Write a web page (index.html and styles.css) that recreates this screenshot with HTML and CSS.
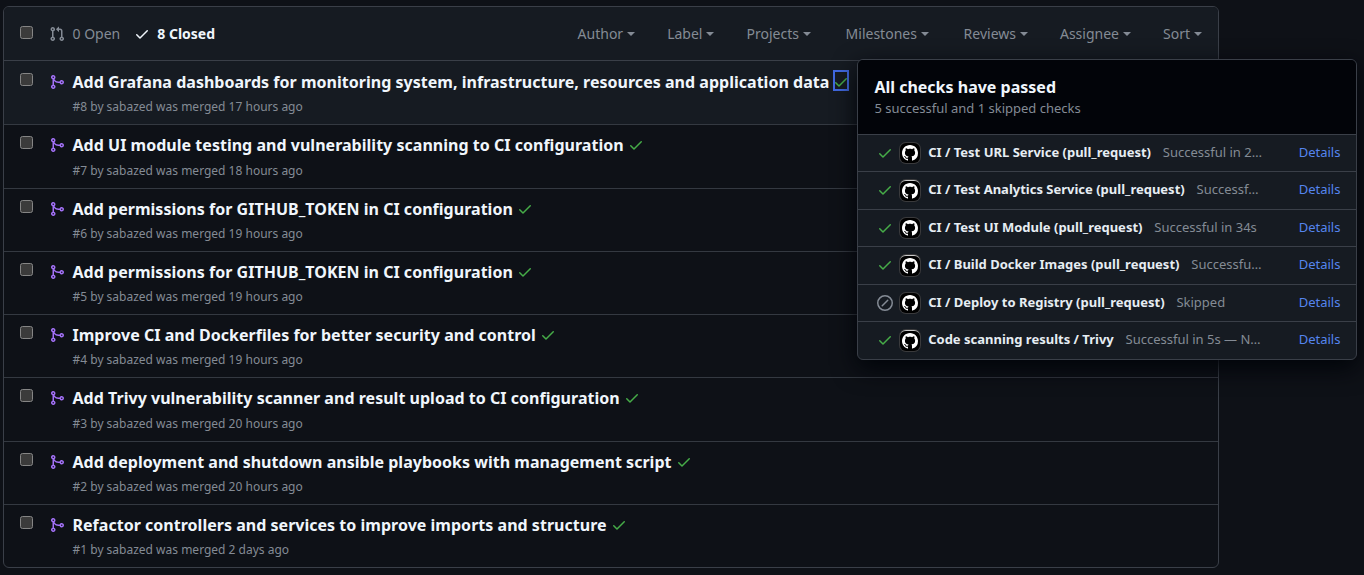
FILE: index.html
```html
<!DOCTYPE html>
<html lang="en">
<head>
<meta charset="utf-8">
<title>Pull requests</title>
<link rel="stylesheet" href="styles.css">
</head>
<body>
<svg class="defs" width="0" height="0">
<symbol id="pr" viewBox="0 0 16 16"><path d="M1.5 3.25a2.25 2.25 0 1 1 3 2.122v5.256a2.251 2.251 0 1 1-1.5 0V5.372A2.25 2.25 0 0 1 1.5 3.25Zm5.677-.177L9.573.677A.25.25 0 0 1 10 .854V2.5h1A2.5 2.5 0 0 1 13.5 5v5.628a2.251 2.251 0 1 1-1.5 0V5a1 1 0 0 0-1-1h-1v1.646a.25.25 0 0 1-.427.177L7.177 3.427a.25.25 0 0 1 0-.354ZM3.75 2.5a.75.75 0 1 0 0 1.5.75.75 0 0 0 0-1.5Zm0 9.5a.75.75 0 1 0 0 1.5.75.75 0 0 0 0-1.5Zm8.25.75a.75.75 0 1 0 1.5 0 .75.75 0 0 0-1.5 0Z"/></symbol>
<symbol id="merge" viewBox="0 0 16 16"><path d="M5.45 5.154A4.25 4.25 0 0 0 9.25 7.5h1.378a2.251 2.251 0 1 1 0 1.5H9.25A5.734 5.734 0 0 1 5 7.123v3.505a2.25 2.25 0 1 1-1.5 0V5.372a2.25 2.25 0 1 1 1.95-.218ZM4.25 13.5a.75.75 0 1 0 0-1.5.75.75 0 0 0 0 1.5Zm8.5-4.5a.75.75 0 1 0 0-1.5.75.75 0 0 0 0 1.5ZM5 3.25a.75.75 0 1 0-1.5 0 .75.75 0 0 0 1.5 0Z"/></symbol>
<symbol id="check" viewBox="0 0 16 16"><path d="M13.78 4.22a.75.75 0 0 1 0 1.06l-7.25 7.25a.75.75 0 0 1-1.06 0L2.22 9.28a.751.751 0 0 1 .018-1.042.751.751 0 0 1 1.042-.018L6 10.94l6.72-6.72a.75.75 0 0 1 1.06 0Z"/></symbol>
<symbol id="skip" viewBox="0 0 16 16"><path d="M8 0a8 8 0 1 1 0 16A8 8 0 0 1 8 0ZM1.5 8a6.5 6.5 0 1 0 13 0 6.5 6.5 0 0 0-13 0Zm9.78-2.22-5.5 5.5a.749.749 0 0 1-1.275-.326.749.749 0 0 1 .215-.734l5.5-5.5a.751.751 0 0 1 1.042.018.751.751 0 0 1 .018 1.042Z"/></symbol>
<symbol id="mark" viewBox="0 0 16 16"><path d="M8 0C3.58 0 0 3.58 0 8c0 3.54 2.29 6.53 5.47 7.59.4.07.55-.17.55-.38 0-.19-.01-.82-.01-1.49-2.01.37-2.53-.49-2.69-.94-.09-.23-.48-.94-.82-1.13-.28-.15-.68-.52-.01-.53.63-.01 1.08.58 1.23.82.72 1.21 1.87.87 2.33.66.07-.52.28-.87.51-1.07-1.78-.2-3.64-.89-3.64-3.95 0-.87.31-1.59.82-2.15-.08-.2-.36-1.02.08-2.12 0 0 .67-.21 2.2.82.64-.18 1.32-.27 2-.27.68 0 1.36.09 2 .27 1.53-1.04 2.2-.82 2.2-.82.44 1.1.16 1.92.08 2.12.51.56.82 1.27.82 2.15 0 3.07-1.87 3.75-3.65 3.95.29.25.54.73.54 1.48 0 1.07-.01 1.93-.01 2.2 0 .21.15.46.55.38A8.013 8.013 0 0 0 16 8c0-4.42-3.58-8-8-8z"/></symbol>
</svg>
<main class="list">
<header class="list-head">
<span class="box"></span>
<a class="state"><svg class="icon"><use href="#pr"/></svg>0 Open</a>
<a class="state current"><svg class="icon"><use href="#check"/></svg>8 Closed</a>
<nav class="filters"><a>Author</a><a>Label</a><a class="wide">Projects</a><a class="wide">Milestones</a><a>Reviews</a><a>Assignee</a><a>Sort</a></nav>
</header>
<article class="row tall hover"><span class="box"></span><svg class="icon merge"><use href="#merge"/></svg><div class="text"><h3>Add Grafana dashboards for monitoring system, infrastructure, resources and application data<span class="status focus"><svg class="icon"><use href="#check"/></svg></span></h3><p>#8 by sabazed was merged 17 hours ago</p></div></article>
<article class="row tall"><span class="box"></span><svg class="icon merge"><use href="#merge"/></svg><div class="text"><h3>Add UI module testing and vulnerability scanning to CI configuration<span class="status"><svg class="icon"><use href="#check"/></svg></span></h3><p>#7 by sabazed was merged 18 hours ago</p></div></article>
<article class="row"><span class="box"></span><svg class="icon merge"><use href="#merge"/></svg><div class="text"><h3>Add permissions for GITHUB_TOKEN in CI configuration<span class="status"><svg class="icon"><use href="#check"/></svg></span></h3><p>#6 by sabazed was merged 19 hours ago</p></div></article>
<article class="row"><span class="box"></span><svg class="icon merge"><use href="#merge"/></svg><div class="text"><h3>Add permissions for GITHUB_TOKEN in CI configuration<span class="status"><svg class="icon"><use href="#check"/></svg></span></h3><p>#5 by sabazed was merged 19 hours ago</p></div></article>
<article class="row"><span class="box"></span><svg class="icon merge"><use href="#merge"/></svg><div class="text"><h3>Improve CI and Dockerfiles for better security and control<span class="status"><svg class="icon"><use href="#check"/></svg></span></h3><p>#4 by sabazed was merged 19 hours ago</p></div></article>
<article class="row tall"><span class="box"></span><svg class="icon merge"><use href="#merge"/></svg><div class="text"><h3>Add Trivy vulnerability scanner and result upload to CI configuration<span class="status"><svg class="icon"><use href="#check"/></svg></span></h3><p>#3 by sabazed was merged 20 hours ago</p></div></article>
<article class="row"><span class="box"></span><svg class="icon merge"><use href="#merge"/></svg><div class="text"><h3>Add deployment and shutdown ansible playbooks with management script<span class="status"><svg class="icon"><use href="#check"/></svg></span></h3><p>#2 by sabazed was merged 20 hours ago</p></div></article>
<article class="row"><span class="box"></span><svg class="icon merge"><use href="#merge"/></svg><div class="text"><h3>Refactor controllers and services to improve imports and structure<span class="status"><svg class="icon"><use href="#check"/></svg></span></h3><p>#1 by sabazed was merged 2 days ago</p></div></article>
</main>
<aside class="popover">
<header class="pop-head"><h2>All checks have passed</h2><p>5 successful and 1 skipped checks</p></header>
<div class="check"><svg class="icon ok"><use href="#check"/></svg><span class="avatar"><svg><use href="#mark"/></svg></span><p class="name"><strong>CI / Test URL Service (pull_request)</strong>Successful in 2…</p><a class="details">Details</a></div>
<div class="check"><svg class="icon ok"><use href="#check"/></svg><span class="avatar"><svg><use href="#mark"/></svg></span><p class="name"><strong>CI / Test Analytics Service (pull_request)</strong>Successf…</p><a class="details">Details</a></div>
<div class="check"><svg class="icon ok"><use href="#check"/></svg><span class="avatar"><svg><use href="#mark"/></svg></span><p class="name"><strong>CI / Test UI Module (pull_request)</strong>Successful in 34s</p><a class="details">Details</a></div>
<div class="check"><svg class="icon ok"><use href="#check"/></svg><span class="avatar"><svg><use href="#mark"/></svg></span><p class="name"><strong>CI / Build Docker Images (pull_request)</strong>Successfu…</p><a class="details">Details</a></div>
<div class="check"><svg class="icon"><use href="#skip"/></svg><span class="avatar"><svg><use href="#mark"/></svg></span><p class="name"><strong>CI / Deploy to Registry (pull_request)</strong>Skipped</p><a class="details">Details</a></div>
<div class="check"><svg class="icon ok"><use href="#check"/></svg><span class="avatar"><svg><use href="#mark"/></svg></span><p class="name"><strong>Code scanning results / Trivy</strong>Successful in 5s — N…</p><a class="details">Details</a></div>
</aside>
</body>
</html>
```
FILE: styles.css
```css
* { box-sizing: border-box; }
body { margin: 0; height: 575px; overflow: hidden; background: #0e1117; color: #848b95; font: 14px/21px "Noto Sans", sans-serif; position: relative; padding: 6px 0 0 3px; }
h2, h3, p { margin: 0; }
.defs { position: absolute; }
.icon { width: 16px; height: 16px; fill: currentColor; flex: none; display: block; }
.list { width: 1216px; height: 562px; border: 1px solid #3a3f48; border-radius: 6px; overflow: hidden; }
.list-head { display: flex; align-items: center; height: 53px; padding: 0 16px; background: #161b22; }
.box { width: 13px; height: 13px; flex: none; background: #3b3b3b; border: 1px solid #858585; border-radius: 2.5px; }
.list-head .box { margin: 0 16px 3px 0; }
.state { display: flex; align-items: center; gap: 7.5px; margin-right: 14px; }
.state .icon { margin-top: 1px; }
.current { color: #f0f6fc; font-weight: 700; gap: 7px; }
.filters { display: flex; gap: 32px; margin-left: auto; }
.filters .wide { margin-right: 2.7px; }
.filters a { display: flex; align-items: center; }
.filters a::after { content: ""; margin-left: 4px; border: 4px solid transparent; border-top-color: currentColor; border-bottom: 0; }
.row { display: flex; height: 63px; border-top: 1px solid #343941; padding: 0 16px; }
.row.tall { height: 64px; }
.row.hover { background: #161b22; padding-top: 1px; border-color: #3a3f48; }
.row .box { margin: 11px 16px 0 0; }
.merge { color: #a371f7; margin: 12px 7.5px 0 0; }
.text { display: flex; flex-direction: column; justify-content: space-between; padding: 8px 0; }
.row h3 { display: flex; font-size: 16px; line-height: 24px; font-weight: 700; letter-spacing: 0.022px; color: #f0f6fc; height: 24px; white-space: nowrap; }
.row p { font-size: 12px; line-height: 18px; }
.status { color: #46ac48; width: 16px; height: 21px; margin-left: 4px; padding-top: 4px; }
.focus { outline: 2px solid #4169e1; outline-offset: -2px; }
.popover { position: absolute; left: 857px; top: 59px; width: 500px; height: 301px; background: #161b22; border: 1px solid #3a3f48; border-radius: 6px; overflow: hidden; box-shadow: 0 8px 24px #010409; font-size: 13px; }
.pop-head { height: 74px; padding: 15px 16.4px; background: #020409; }
.pop-head h2 { font-size: 16px; line-height: 24px; font-weight: 700; color: #f0f6fc; }
.pop-head p { line-height: 20px; margin-top: -1px; }
.check { display: flex; align-items: flex-start; height: 37px; border-top: 1px solid #3a3f48; padding: 0 15.6px 0 19px; }
.check:nth-child(odd) { height: 38px; }
.check .icon { margin-top: 10px; }
.ok { color: #46ac48; }
.avatar { width: 20px; height: 20px; margin: 8px 8.2px 0 7px; display: flex; align-items: center; justify-content: center; flex: none; background: #000; border-radius: 6px; box-shadow: 0 0 0 1px #3a3a3c; }
.check:nth-child(odd) .avatar { height: 21px; border-top: 1px solid #c8c8c8; }
.avatar svg { width: 16px; height: 16px; fill: #fff; }
.name { white-space: nowrap; line-height: 21px; margin-top: 7px; }
.name strong { font-weight: 700; color: #e6edf3; margin-right: 11.8px; }
.details { margin: 7px 0 0 auto; color: #5585ee; }
```
